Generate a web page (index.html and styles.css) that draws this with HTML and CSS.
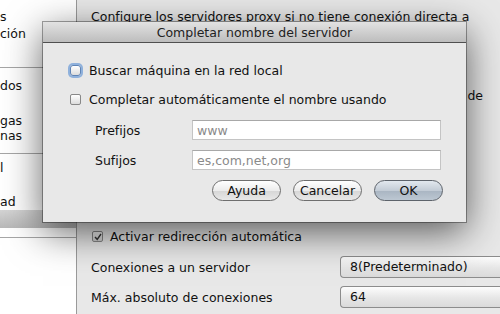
FILE: index.html
```html
<!DOCTYPE html>
<html lang="es">
<head>
    <meta charset="UTF-8">
    <title>Preferencias de red</title>
    <link rel="stylesheet" href="styles.css">
</head>
<body>
<div class="ventana">
    <div class="lista">
        <div class="grupo grupo1">
            <div class="item">s</div>
            <div class="item">ción</div>
        </div>
        <div class="grupo grupo2">
            <div class="item">dos</div>
            <div class="item doble">gas<br>nas</div>
        </div>
        <div class="grupo grupo3">
            <div class="item">l</div>
            <div class="item item-bajo">ad</div>
            <div class="seleccion"></div>
        </div>
    </div>

    <div class="panel">
        <p class="intro">Configure los servidores proxy si no tiene conexión directa a</p>
        <p class="intro derecha">de</p>
        <div class="fila-check">
            <span class="check marcado">
                <svg width="8" height="8" viewBox="0 0 8 8"><path d="M1 4 L3.2 6.3 L7 1" fill="none" stroke="#333" stroke-width="1.4"/></svg>
            </span>
            Activar redirección automática
        </div>
        <div class="fila-popup">
            <span class="etiqueta">Conexiones a un servidor</span>
            <span class="popup">8(Predeterminado)</span>
        </div>
        <div class="fila-popup">
            <span class="etiqueta">Máx. absoluto de conexiones</span>
            <span class="popup">64</span>
        </div>
    </div>
</div>

<div class="dialogo">
    <div class="titulo">Completar nombre del servidor</div>
    <div class="cuerpo">
        <label class="opcion"><span class="check foco"></span>Buscar máquina en la red local</label>
        <label class="opcion"><span class="check"></span>Completar automáticamente el nombre usando</label>
        <div class="campo">
            <span class="campo-nombre">Prefijos</span>
            <input type="text" placeholder="www">
        </div>
        <div class="campo">
            <span class="campo-nombre">Sufijos</span>
            <input type="text" placeholder="es,com,net,org">
        </div>
        <div class="botones">
            <button class="boton">Ayuda</button>
            <button class="boton">Cancelar</button>
            <button class="boton defecto">OK</button>
        </div>
    </div>
</div>
</body>
</html>
```

FILE: styles.css
```css
body {
    margin: 0;
    width: 500px;
    height: 314px;
    overflow: hidden;
    background-color: #e8e8e8;
    font-family: "DejaVu Sans", sans-serif;
    font-size: 12.5px;
    color: #111;
}

.ventana {
    display: flex;
    height: 314px;
}

/* lista lateral */
.lista {
    width: 76px;
    flex-shrink: 0;
    background-color: #fff;
    border-right: 1px solid #9a9a9a;
}

.grupo {
    border-bottom: 1px solid #a6a6a6;
    box-sizing: border-box;
}

.grupo1 {
    height: 68px;
    padding-top: 8px;
}

.grupo2 {
    height: 86px;
    padding-top: 9px;
}

.grupo3 {
    height: 84px;
    padding-top: 5px;
}

.item {
    line-height: 17px;
}

.doble {
    margin-top: 19px;
    line-height: 15px;
}

.item-bajo {
    margin-top: 17px;
}

.seleccion {
    height: 18px;
    background: linear-gradient(to bottom, #d4d4d4, #b8b8b8);
}

/* panel derecho */
.panel {
    flex: 1;
    padding: 8px 0 0 14px;
}

.intro {
    margin: 0;
    line-height: 17px;
    white-space: nowrap;
}

.derecha {
    margin-top: 62px;
    text-align: right;
    padding-right: 17px;
}

.fila-check {
    display: flex;
    align-items: center;
    gap: 7px;
    margin-top: 124px;
    height: 17px;
    padding-left: 1px;
}

.fila-popup {
    display: flex;
    align-items: center;
    height: 22px;
    margin-top: 8px;
}

.fila-check + .fila-popup {
    margin-top: 11px;
}

.etiqueta {
    width: 249px;
    flex-shrink: 0;
}

.popup {
    flex: 1;
    height: 20px;
    line-height: 20px;
    border: 1px solid #8c8c8c;
    border-right: none;
    border-radius: 4px 0 0 4px;
    padding-left: 9px;
    background: linear-gradient(to bottom, #fdfdfd, #e6e6e6 55%, #dadada);
}

/* casillas */
.check {
    display: inline-flex;
    align-items: center;
    justify-content: center;
    width: 9px;
    height: 9px;
    border: 1px solid #888;
    border-radius: 2px;
    background: linear-gradient(to bottom, #fff, #dcdcdc);
    flex-shrink: 0;
}

.marcado {
    background: linear-gradient(to bottom, #f4f4f4, #cfcfcf);
}

.foco {
    border-color: #5f84b6;
    box-shadow: 0 0 0 2px #8fb1dc;
    border-radius: 3px;
}

/* dialogo */
.dialogo {
    position: absolute;
    left: 43px;
    top: 22px;
    width: 423px;
    height: 200px;
    background-color: #e8e8e8;
    box-shadow: 0 10px 36px rgba(0, 0, 0, 0.62), 0 0 0 1px rgba(0, 0, 0, 0.35);
}

.titulo {
    height: 20px;
    line-height: 21px;
    text-align: center;
    color: #222;
    background: linear-gradient(to bottom, #e2e2e2, #bdbdbd);
    border-bottom: 1px solid #4f4f4f;
}

.cuerpo {
    padding: 19px 25px 0 27px;
}

.opcion {
    display: flex;
    align-items: center;
    gap: 8px;
    height: 17px;
    margin-bottom: 12px;
}

.campo {
    display: flex;
    align-items: center;
    height: 20px;
    margin-bottom: 10px;
}

.campo-nombre {
    width: 97px;
    padding-left: 25px;
}

.campo input {
    flex: 1;
    height: 20px;
    box-sizing: border-box;
    border: 1px solid #c4c4c4;
    border-top-color: #a8a8a8;
    background-color: #fff;
    font-family: "DejaVu Sans", sans-serif;
    font-size: 12.5px;
    padding: 0 4px;
    outline: none;
}

.campo input::placeholder {
    color: #8a8a8a;
}

.botones {
    display: flex;
    justify-content: flex-end;
    gap: 12px;
    margin-top: 4px;
    margin-right: -2px;
}

.boton {
    width: 69px;
    height: 21px;
    border: 1px solid #6e6e6e;
    border-radius: 11px;
    background: linear-gradient(to bottom, #ffffff, #ececec 50%, #d6d6d6 51%, #e8e8e8);
    font-family: "DejaVu Sans", sans-serif;
    font-size: 12.5px;
    color: #111;
    padding: 0;
}

.defecto {
    background: linear-gradient(to bottom, #e2e8ee, #c3ccd6 50%, #a9b5c2 51%, #bcc7d2);
    border-color: #5d636b;
}
```
